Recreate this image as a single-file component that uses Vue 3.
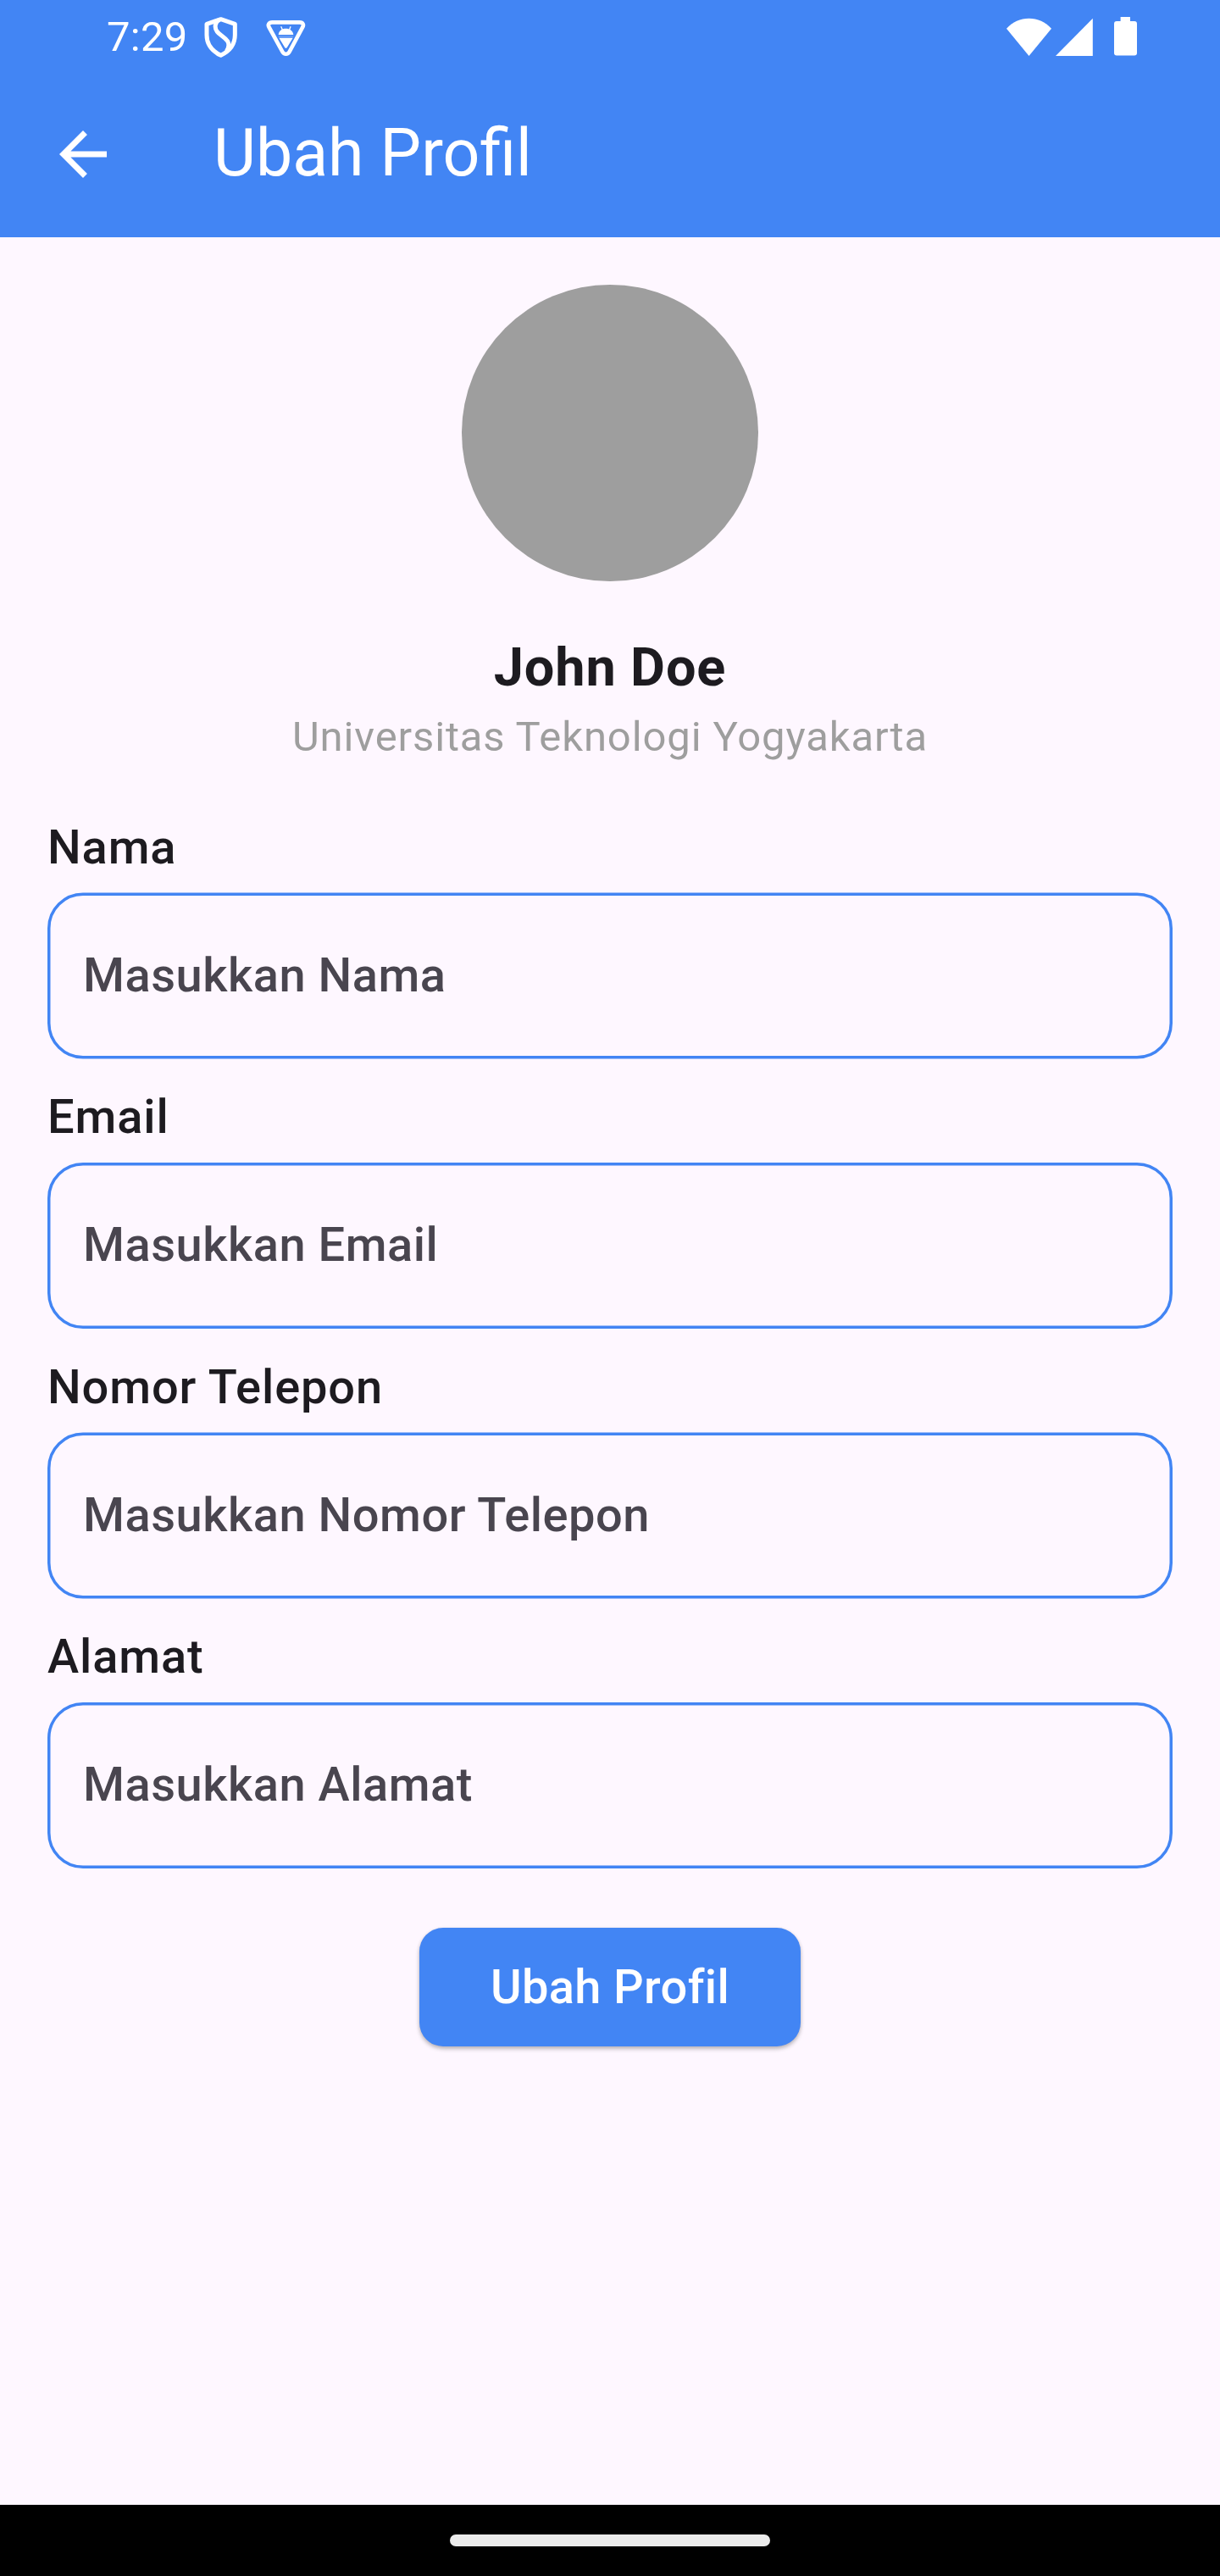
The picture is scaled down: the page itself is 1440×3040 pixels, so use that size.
<script setup>
import { reactive } from 'vue'

const fields = reactive([
  { id: 'nama', label: 'Nama', value: '' },
  { id: 'email', label: 'Email', value: '' },
  { id: 'telepon', label: 'Nomor Telepon', value: '' },
  { id: 'alamat', label: 'Alamat', value: '' }
])
</script>

<template>
  <div class="screen">
    <header class="top">
      <div class="status">
        <span class="time">7:29</span>
        <svg class="shield" viewBox="414 54 132 156" fill="none" stroke="#fff" stroke-width="15" stroke-linejoin="round">
          <path d="M482 68L432 85V124C432 158 453 182 482 196C511 182 532 158 532 124V85Z" />
          <path d="M477 70C461 78 458 98 469 112C479 125 495 130 506 146C513 158 511 168 502 182" />
        </svg>
        <svg class="badge" viewBox="639 66 144 138" fill="none">
          <path d="M664 79H761C773 79 777 88 771 97L725 183C719 194 706 194 700 183L653 97C647 88 652 79 664 79Z" stroke="#fff" stroke-width="14" />
          <path d="M686 123C687 109 698 101 712 101S738 109 739 123ZM688 134H737L717 167Q712 174 708 167Z" fill="#fff" />
          <path d="M700 105L695 94M725 105L729 94" stroke="#fff" stroke-width="4" />
          <path d="M686 129H739" stroke="#fff" stroke-opacity=".35" stroke-width="3" />
        </svg>
        <span class="spacer"></span>
        <svg class="wifi" viewBox="0 0 53 45" fill="#fff"><path d="M0 12.8C7 5 16.5 .8 26.5 .8S46 5 53 12.8L26.5 45Z" /></svg>
        <svg class="signal" viewBox="0 0 45 45" fill="#fff"><path d="M0 45L43.8 .8V45Z" /></svg>
        <svg class="battery" viewBox="0 0 27 46" fill="#fff"><path d="M7.6 0H19V5H24Q27 5 27 8V42.6Q27 45.6 24 45.6H3Q0 45.6 0 42.6V8Q0 5 3 5H7.6Z" /></svg>
      </div>
      <div class="bar">
        <svg class="back" viewBox="0 0 24 24" fill="#fff"><path d="M20 11H7.83l5.59-5.59L12 4l-8 8 8 8 1.41-1.41L7.83 13H20v-2z" /></svg>
        <h1>Ubah Profil</h1>
      </div>
    </header>

    <main>
      <div class="avatar"></div>
      <h2>John Doe</h2>
      <p class="campus">Universitas Teknologi Yogyakarta</p>

      <form @submit.prevent>
        <div v-for="(f, i) in fields" :key="f.id" class="field">
          <label :for="f.id">{{ f.label }}</label>
          <div class="box">
            <svg class="outline" viewBox="0 0 1328 197" fill="none">
              <rect x="1.75" :y="i % 2 ? 1.75 : 2.25" width="1324.5" height="192.5" rx="40.25" stroke="#4285f4" stroke-width="3.5" />
            </svg>
            <input :id="f.id" v-model="f.value" :placeholder="'Masukkan ' + f.label" />
          </div>
        </div>
        <button type="submit">Ubah Profil</button>
      </form>
    </main>

    <footer><span class="pill"></span></footer>
  </div>
</template>

<style>
body {
  margin: 0;
}
</style>

<style scoped>
.screen {
  display: flex;
  flex-direction: column;
  width: 1440px;
  height: 3040px;
  background: #fef7ff;
  color: #1d1b20;
  font-family: Roboto, "Liberation Sans", sans-serif;
}
svg {
  display: block;
  flex: none;
}
.top {
  height: 280px;
  background: #4285f4;
  color: #fff;
}
.status {
  display: flex;
  align-items: flex-start;
  height: 84px;
  padding: 0 98px 0 126px;
}
.time {
  width: 112px;
  font-size: 49px;
  line-height: 88px;
  letter-spacing: 0.3px;
  white-space: nowrap;
}
.shield {
  width: 44px;
  height: 52px;
  margin-top: 18px;
}
.badge {
  width: 48px;
  height: 46px;
  margin: 22px 0 0 31px;
}
.spacer {
  flex: 1;
}
.wifi {
  width: 53px;
  height: 45px;
  margin-top: 20.5px;
}
.signal {
  width: 45px;
  height: 45px;
  margin: 20.5px 0 0 5px;
}
.battery {
  width: 27px;
  height: 46px;
  margin: 20px 0 0 24px;
}
.bar {
  display: flex;
  align-items: center;
  height: 194px;
  padding: 0 56px;
}
.back {
  width: 84px;
  height: 84px;
  margin: 2px 112px 0 0;
}
h1 {
  margin: 0;
  font-size: 77px;
  font-weight: 400;
  line-height: 98px;
}
main {
  display: flex;
  flex: 1;
  flex-direction: column;
  align-items: center;
  padding: 56px 56px 0;
}
.avatar {
  width: 350px;
  height: 350px;
  border-radius: 50%;
  background: #9e9e9e;
}
h2 {
  margin: 62px 0 0;
  font-size: 63px;
  font-weight: 700;
  line-height: 80px;
  letter-spacing: 0.875px;
}
.campus {
  margin: 12px 0 0;
  color: #9e9e9e;
  font-size: 49px;
  line-height: 60px;
  letter-spacing: 0.875px;
}
form {
  display: flex;
  flex-direction: column;
  width: 1328px;
  margin-top: 58px;
}
.field {
  display: flex;
  flex-direction: column;
  gap: 11px;
  margin-bottom: 26px;
}
.field:nth-child(even) {
  gap: 12px;
}
label {
  font-size: 56px;
  font-weight: 500;
  line-height: 84px;
  letter-spacing: 0.875px;
}
.box {
  display: grid;
  height: 197px;
}
.outline,
input {
  grid-area: 1 / 1;
}
.outline {
  width: 1328px;
  height: 197px;
}
input {
  box-sizing: border-box;
  width: 100%;
  height: 196px;
  margin: 0;
  padding: 0 42px;
  border: 0;
  outline: 0;
  background: transparent;
  color: #1d1b20;
  font: 500 56px Roboto, "Liberation Sans", sans-serif;
  letter-spacing: 0.525px;
}
.field:nth-child(even) input {
  margin-top: -1px;
}
input::placeholder {
  color: #49454f;
  opacity: 1;
}
button {
  align-self: center;
  width: 450px;
  height: 140px;
  margin-top: 43px;
  padding: 0;
  border: 0;
  border-radius: 28px;
  background: #4285f4;
  box-shadow: 0 3px 5px rgba(0, 0, 0, 0.24), 0 1px 4px rgba(0, 0, 0, 0.08);
  color: #fff;
  font: 500 56px Roboto, "Liberation Sans", sans-serif;
  letter-spacing: 0.35px;
}
footer {
  display: flex;
  align-items: center;
  justify-content: center;
  height: 84px;
  background: #000;
}
.pill {
  width: 378px;
  height: 14px;
  border-radius: 7px;
  background: #ebebeb;
}
</style>
